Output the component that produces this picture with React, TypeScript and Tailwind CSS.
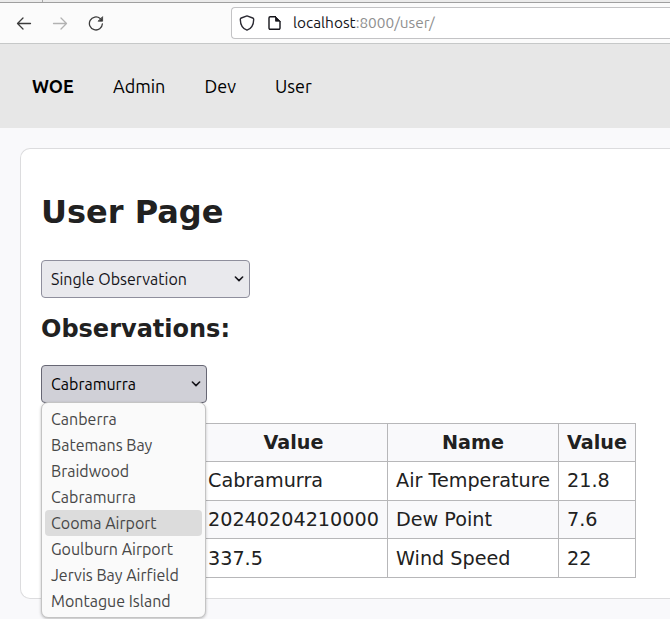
import React from "react";

const ui = "font-['Ubuntu','Open_Sans','Noto_Sans',sans-serif]";

function Chevron() {
  return (
    <svg width="10" height="6" viewBox="0 0 10 6" fill="none" stroke="#15141a" strokeWidth="1.6" strokeLinecap="round" strokeLinejoin="round">
      <path d="M1.4 1 L5 4.6 L8.6 1" />
    </svg>
  );
}

const stations = [
  "Canberra",
  "Batemans Bay",
  "Braidwood",
  "Cabramurra",
  "Cooma Airport",
  "Goulburn Airport",
  "Jervis Bay Airfield",
  "Montague Island",
];
const highlighted = "Cooma Airport";

const rows = [
  ["", "Cabramurra", "Air Temperature", "21.8"],
  ["", "20240204210000", "Dew Point", "7.6"],
  ["", "337.5", "Wind Speed", "22"],
];
const rowStyles = ["h-[39px] leading-[22px]", "h-[38px] bg-[#f9f9fb] leading-[23px]", "h-[39px] leading-[23px]"];

const cell = "border border-[#b7b7b9] px-2 whitespace-nowrap";

function Toolbar() {
  return (
    <header className="flex h-[44px] flex-col">
      <div className="flex h-[3px] shrink-0 border-b border-[#9f9f9f] bg-[#ebebeb]">
        <div className="w-[43px] border-r border-[#a8a8a8]" />
      </div>
      <div className="flex flex-1 items-center border-b border-[#c6c8c8] bg-[#fbfbfb] pl-4">
        <svg width="16" height="16" viewBox="0 0 16 16" fill="none" stroke="#3b3b3b" strokeWidth="1.3" strokeLinecap="round" strokeLinejoin="round">
          <path d="M14.5 8.5H1.5M7 3 L1.5 8.5 L7 14" />
        </svg>
        <svg className="ml-5" width="16" height="16" viewBox="0 0 16 16" fill="none" stroke="#b2b2b2" strokeWidth="1.3" strokeLinecap="round" strokeLinejoin="round">
          <path d="M1.5 8.5H14.5M9 3 L14.5 8.5 L9 14" />
        </svg>
        <svg className="ml-5" width="16" height="16" viewBox="0 0 16 16" fill="none" stroke="#3b3b3b" strokeWidth="1.3" strokeLinecap="round">
          <path d="M12.2 3.6A6.5 6.5 0 1 0 14.4 8.8" />
          <path d="M14.6 2V6.2H10.4Z" fill="#3b3b3b" strokeWidth="0.8" strokeLinejoin="round" />
        </svg>
        <div className="ml-[127px] flex h-8 flex-1 items-center rounded-l border border-r-0 border-[#c3c3c5] bg-white pl-[7px]">
          <svg width="16" height="16" viewBox="0 0 16 16" fill="none" stroke="#2b2a33" strokeWidth="1.4" strokeLinejoin="round">
            <path d="M8 .9 L13.7 3 C14.5 3.3 14.7 3.8 14.7 4.4 C14.6 9.5 12.3 13.6 8 15.2 C3.7 13.6 1.4 9.5 1.3 4.4 C1.3 3.8 1.5 3.3 2.3 3Z" />
          </svg>
          <svg className="ml-3" width="16" height="16" viewBox="0 0 16 16" fill="none" stroke="#15141a" strokeWidth="1.4" strokeLinejoin="round">
            <path d="M9 1.7H3.2A1.2 1.2 0 0 0 2 2.9V13.1A1.2 1.2 0 0 0 3.2 14.3H11.8A1.2 1.2 0 0 0 13 13.1V6" />
            <path d="M8.5 1.5L13.2 6.2H8.5Z" fill="#15141a" strokeWidth="0.8" />
          </svg>
          <div className={`${ui} ml-[10px] text-[15.4px] leading-5 text-[#8f8f8f]`}>
            <span className="text-[#15141a]">localhost</span>:8000/user/
          </div>
        </div>
      </div>
    </header>
  );
}

export default function App() {
  return (
    <div className="h-[619px] w-[670px] overflow-hidden bg-[#f9f9fb] font-['DejaVu_Sans',sans-serif] text-[#212121]">
      <Toolbar />
      <nav className={`${ui} flex h-[84px] items-center bg-[#e7e7e7] pl-8 text-[18px] text-black`}>
        <a className="w-[81px] font-bold">WOE</a>
        <a className="w-[91.5px]">Admin</a>
        <a className="w-[70.5px]">Dev</a>
        <a>User</a>
      </nav>
      <main className="mt-5 ml-5 h-[451px] rounded-l-[10px] border border-r-0 border-[#dcdcde] bg-white pl-5">
        <h1 className="mt-[43px] text-[32px] leading-[40px] font-bold">User Page</h1>
        <div className={`${ui} mt-[28px] flex h-[38px] w-[209px] items-center justify-between rounded border border-[#8f8f9d] bg-[#e9e9ed] pr-[5px] pl-[9px] text-[16px] text-[#15141a]`}>
          <span>Single Observation</span>
          <Chevron />
        </div>
        <h2 className="mt-[17px] text-[24px] leading-[28px] font-bold">Observations:</h2>
        <div className="relative mt-[22px] w-[166px]">
          <div className={`${ui} flex h-[38px] items-center justify-between rounded border border-[#676774] bg-[#d0d0d7] pr-[5px] pl-[9px] text-[16px] text-black`}>
            <span>Cabramurra</span>
            <Chevron />
          </div>
          <ul className={`${ui} absolute top-[37px] left-0 w-[165px] rounded-[7px] border border-[#c4c4c4] bg-[#fafafa] p-[3px] text-[16px] leading-[26px] text-[#474747] shadow-[0_1px_3px_rgba(0,0,0,0.25)]`}>
            {stations.map((s) => (
              <li key={s} className={`h-[26px] rounded pl-[6px] whitespace-nowrap ${s === highlighted ? "bg-[#dcdcdc]" : ""}`}>
                {s}
              </li>
            ))}
          </ul>
        </div>
        <table className="mt-[20px] w-[595px] table-fixed border-collapse text-[19.2px]">
          <colgroup>
            <col className="w-[158px]" />
            <col className="w-[188px]" />
            <col className="w-[171px]" />
            <col className="w-[77px]" />
          </colgroup>
          <thead>
            <tr className="h-[38px] bg-[#f9f9fb] leading-[23px]">
              <th className={cell}></th>
              <th className={cell}>Value</th>
              <th className={cell}>Name</th>
              <th className={cell}>Value</th>
            </tr>
          </thead>
          <tbody>
            {rows.map((r, i) => (
              <tr key={i} className={rowStyles[i]}>
                {r.map((v, j) => (
                  <td key={j} className={cell}>{v}</td>
                ))}
              </tr>
            ))}
          </tbody>
        </table>
      </main>
    </div>
  );
}
